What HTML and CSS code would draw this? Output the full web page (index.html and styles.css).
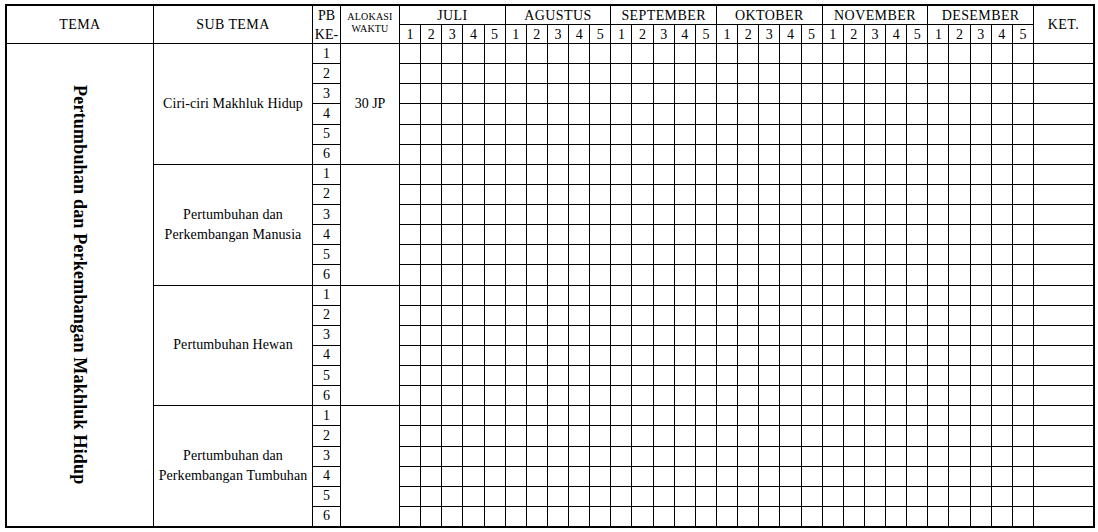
FILE: index.html
```html
<!DOCTYPE html>
<html lang="id">
<head>
<meta charset="utf-8">
<title>Jadwal Tema</title>
<link rel="stylesheet" href="styles.css">
</head>
<body>
<div class="sheet">
  <div class="hd r2">TEMA</div>
  <div class="hd r2">SUB TEMA</div>
  <div class="hd r2 pb"><span>PB</span><span>KE-</span></div>
  <div class="hd r2 alok"><span>ALOKASI</span><span>WAKTU</span></div>
  <div class="hd mon">JULI</div>
  <div class="hd mon">AGUSTUS</div>
  <div class="hd mon">SEPTEMBER</div>
  <div class="hd mon">OKTOBER</div>
  <div class="hd mon">NOVEMBER</div>
  <div class="hd mon">DESEMBER</div>
  <div class="hd r2">KET.</div>
  <div class="wk">1</div><div class="wk">2</div><div class="wk">3</div><div class="wk">4</div><div class="wk">5</div>
  <div class="wk">1</div><div class="wk">2</div><div class="wk">3</div><div class="wk">4</div><div class="wk">5</div>
  <div class="wk">1</div><div class="wk">2</div><div class="wk">3</div><div class="wk">4</div><div class="wk">5</div>
  <div class="wk">1</div><div class="wk">2</div><div class="wk">3</div><div class="wk">4</div><div class="wk">5</div>
  <div class="wk">1</div><div class="wk">2</div><div class="wk">3</div><div class="wk">4</div><div class="wk">5</div>
  <div class="wk">1</div><div class="wk">2</div><div class="wk">3</div><div class="wk">4</div><div class="wk">5</div>

  <div class="tema"><span class="tema-v">Pertumbuhan dan Perkembangan Makhluk Hidup</span></div>

  <div class="sub">Ciri-ciri Makhluk Hidup</div>
  <div class="num">1</div>
  <div class="al">30 JP</div>
  <i></i><i></i><i></i><i></i><i></i><i></i><i></i><i></i><i></i><i></i><i></i><i></i><i></i><i></i><i></i><i></i><i></i><i></i><i></i><i></i><i></i><i></i><i></i><i></i><i></i><i></i><i></i><i></i><i></i><i></i><i></i>
  <div class="num">2</div><i></i><i></i><i></i><i></i><i></i><i></i><i></i><i></i><i></i><i></i><i></i><i></i><i></i><i></i><i></i><i></i><i></i><i></i><i></i><i></i><i></i><i></i><i></i><i></i><i></i><i></i><i></i><i></i><i></i><i></i><i></i>
  <div class="num">3</div><i></i><i></i><i></i><i></i><i></i><i></i><i></i><i></i><i></i><i></i><i></i><i></i><i></i><i></i><i></i><i></i><i></i><i></i><i></i><i></i><i></i><i></i><i></i><i></i><i></i><i></i><i></i><i></i><i></i><i></i><i></i>
  <div class="num">4</div><i></i><i></i><i></i><i></i><i></i><i></i><i></i><i></i><i></i><i></i><i></i><i></i><i></i><i></i><i></i><i></i><i></i><i></i><i></i><i></i><i></i><i></i><i></i><i></i><i></i><i></i><i></i><i></i><i></i><i></i><i></i>
  <div class="num">5</div><i></i><i></i><i></i><i></i><i></i><i></i><i></i><i></i><i></i><i></i><i></i><i></i><i></i><i></i><i></i><i></i><i></i><i></i><i></i><i></i><i></i><i></i><i></i><i></i><i></i><i></i><i></i><i></i><i></i><i></i><i></i>
  <div class="num">6</div><i></i><i></i><i></i><i></i><i></i><i></i><i></i><i></i><i></i><i></i><i></i><i></i><i></i><i></i><i></i><i></i><i></i><i></i><i></i><i></i><i></i><i></i><i></i><i></i><i></i><i></i><i></i><i></i><i></i><i></i><i></i>

  <div class="sub">Pertumbuhan dan<br>Perkembangan Manusia</div>
  <div class="num">1</div>
  <div class="al"></div>
  <i></i><i></i><i></i><i></i><i></i><i></i><i></i><i></i><i></i><i></i><i></i><i></i><i></i><i></i><i></i><i></i><i></i><i></i><i></i><i></i><i></i><i></i><i></i><i></i><i></i><i></i><i></i><i></i><i></i><i></i><i></i>
  <div class="num">2</div><i></i><i></i><i></i><i></i><i></i><i></i><i></i><i></i><i></i><i></i><i></i><i></i><i></i><i></i><i></i><i></i><i></i><i></i><i></i><i></i><i></i><i></i><i></i><i></i><i></i><i></i><i></i><i></i><i></i><i></i><i></i>
  <div class="num">3</div><i></i><i></i><i></i><i></i><i></i><i></i><i></i><i></i><i></i><i></i><i></i><i></i><i></i><i></i><i></i><i></i><i></i><i></i><i></i><i></i><i></i><i></i><i></i><i></i><i></i><i></i><i></i><i></i><i></i><i></i><i></i>
  <div class="num">4</div><i></i><i></i><i></i><i></i><i></i><i></i><i></i><i></i><i></i><i></i><i></i><i></i><i></i><i></i><i></i><i></i><i></i><i></i><i></i><i></i><i></i><i></i><i></i><i></i><i></i><i></i><i></i><i></i><i></i><i></i><i></i>
  <div class="num">5</div><i></i><i></i><i></i><i></i><i></i><i></i><i></i><i></i><i></i><i></i><i></i><i></i><i></i><i></i><i></i><i></i><i></i><i></i><i></i><i></i><i></i><i></i><i></i><i></i><i></i><i></i><i></i><i></i><i></i><i></i><i></i>
  <div class="num">6</div><i></i><i></i><i></i><i></i><i></i><i></i><i></i><i></i><i></i><i></i><i></i><i></i><i></i><i></i><i></i><i></i><i></i><i></i><i></i><i></i><i></i><i></i><i></i><i></i><i></i><i></i><i></i><i></i><i></i><i></i><i></i>

  <div class="sub">Pertumbuhan Hewan</div>
  <div class="num">1</div>
  <div class="al"></div>
  <i></i><i></i><i></i><i></i><i></i><i></i><i></i><i></i><i></i><i></i><i></i><i></i><i></i><i></i><i></i><i></i><i></i><i></i><i></i><i></i><i></i><i></i><i></i><i></i><i></i><i></i><i></i><i></i><i></i><i></i><i></i>
  <div class="num">2</div><i></i><i></i><i></i><i></i><i></i><i></i><i></i><i></i><i></i><i></i><i></i><i></i><i></i><i></i><i></i><i></i><i></i><i></i><i></i><i></i><i></i><i></i><i></i><i></i><i></i><i></i><i></i><i></i><i></i><i></i><i></i>
  <div class="num">3</div><i></i><i></i><i></i><i></i><i></i><i></i><i></i><i></i><i></i><i></i><i></i><i></i><i></i><i></i><i></i><i></i><i></i><i></i><i></i><i></i><i></i><i></i><i></i><i></i><i></i><i></i><i></i><i></i><i></i><i></i><i></i>
  <div class="num">4</div><i></i><i></i><i></i><i></i><i></i><i></i><i></i><i></i><i></i><i></i><i></i><i></i><i></i><i></i><i></i><i></i><i></i><i></i><i></i><i></i><i></i><i></i><i></i><i></i><i></i><i></i><i></i><i></i><i></i><i></i><i></i>
  <div class="num">5</div><i></i><i></i><i></i><i></i><i></i><i></i><i></i><i></i><i></i><i></i><i></i><i></i><i></i><i></i><i></i><i></i><i></i><i></i><i></i><i></i><i></i><i></i><i></i><i></i><i></i><i></i><i></i><i></i><i></i><i></i><i></i>
  <div class="num">6</div><i></i><i></i><i></i><i></i><i></i><i></i><i></i><i></i><i></i><i></i><i></i><i></i><i></i><i></i><i></i><i></i><i></i><i></i><i></i><i></i><i></i><i></i><i></i><i></i><i></i><i></i><i></i><i></i><i></i><i></i><i></i>

  <div class="sub">Pertumbuhan dan<br>Perkembangan Tumbuhan</div>
  <div class="num">1</div>
  <div class="al"></div>
  <i></i><i></i><i></i><i></i><i></i><i></i><i></i><i></i><i></i><i></i><i></i><i></i><i></i><i></i><i></i><i></i><i></i><i></i><i></i><i></i><i></i><i></i><i></i><i></i><i></i><i></i><i></i><i></i><i></i><i></i><i></i>
  <div class="num">2</div><i></i><i></i><i></i><i></i><i></i><i></i><i></i><i></i><i></i><i></i><i></i><i></i><i></i><i></i><i></i><i></i><i></i><i></i><i></i><i></i><i></i><i></i><i></i><i></i><i></i><i></i><i></i><i></i><i></i><i></i><i></i>
  <div class="num">3</div><i></i><i></i><i></i><i></i><i></i><i></i><i></i><i></i><i></i><i></i><i></i><i></i><i></i><i></i><i></i><i></i><i></i><i></i><i></i><i></i><i></i><i></i><i></i><i></i><i></i><i></i><i></i><i></i><i></i><i></i><i></i>
  <div class="num">4</div><i></i><i></i><i></i><i></i><i></i><i></i><i></i><i></i><i></i><i></i><i></i><i></i><i></i><i></i><i></i><i></i><i></i><i></i><i></i><i></i><i></i><i></i><i></i><i></i><i></i><i></i><i></i><i></i><i></i><i></i><i></i>
  <div class="num">5</div><i></i><i></i><i></i><i></i><i></i><i></i><i></i><i></i><i></i><i></i><i></i><i></i><i></i><i></i><i></i><i></i><i></i><i></i><i></i><i></i><i></i><i></i><i></i><i></i><i></i><i></i><i></i><i></i><i></i><i></i><i></i>
  <div class="num">6</div><i></i><i></i><i></i><i></i><i></i><i></i><i></i><i></i><i></i><i></i><i></i><i></i><i></i><i></i><i></i><i></i><i></i><i></i><i></i><i></i><i></i><i></i><i></i><i></i><i></i><i></i><i></i><i></i><i></i><i></i><i></i>
</div>
</body>
</html>
```
FILE: styles.css
```css
html, body {
  margin: 0;
  padding: 0;
  background: #ffffff;
}

body {
  font-family: "Liberation Serif", "Times New Roman", serif;
  color: #000000;
}

.sheet {
  display: grid;
  grid-template-columns: 146px 158px 27px 58px repeat(30, 1fr) 59px;
  grid-template-rows: 18px 18px repeat(24, 1fr);
  gap: 1px;
  width: 1086px;
  height: 520px;
  margin: 4px 0 0 5px;
  border: 2px solid #000000;
  background: #000000;
}

.sheet > * {
  background: #ffffff;
  display: flex;
  align-items: center;
  justify-content: center;
  text-align: center;
  font-size: 14px;
  font-style: normal;
  line-height: 1;
  overflow: hidden;
}

.hd {
  font-size: 14px;
  letter-spacing: 0.4px;
}

.r2 {
  grid-row: span 2;
}

.mon {
  grid-column: span 5;
  padding-top: 1px;
}

.pb {
  flex-direction: column;
  line-height: 19px;
  letter-spacing: 0;
}

.alok {
  flex-direction: column;
  justify-content: flex-start;
  padding-top: 5px;
  font-size: 10px;
  line-height: 12px;
  letter-spacing: 0.2px;
}

.wk {
  font-size: 14px;
  padding-top: 1px;
}

.tema {
  grid-row: span 24;
}

.tema-v {
  writing-mode: vertical-rl;
  font-weight: bold;
  font-size: 18px;
  letter-spacing: 0.2px;
  white-space: nowrap;
}

.sub {
  grid-row: span 6;
  font-size: 14px;
  line-height: 20px;
  letter-spacing: 0.1px;
}

.al {
  grid-row: span 6;
  font-size: 14px;
}

.num {
  font-size: 14px;
}
```
